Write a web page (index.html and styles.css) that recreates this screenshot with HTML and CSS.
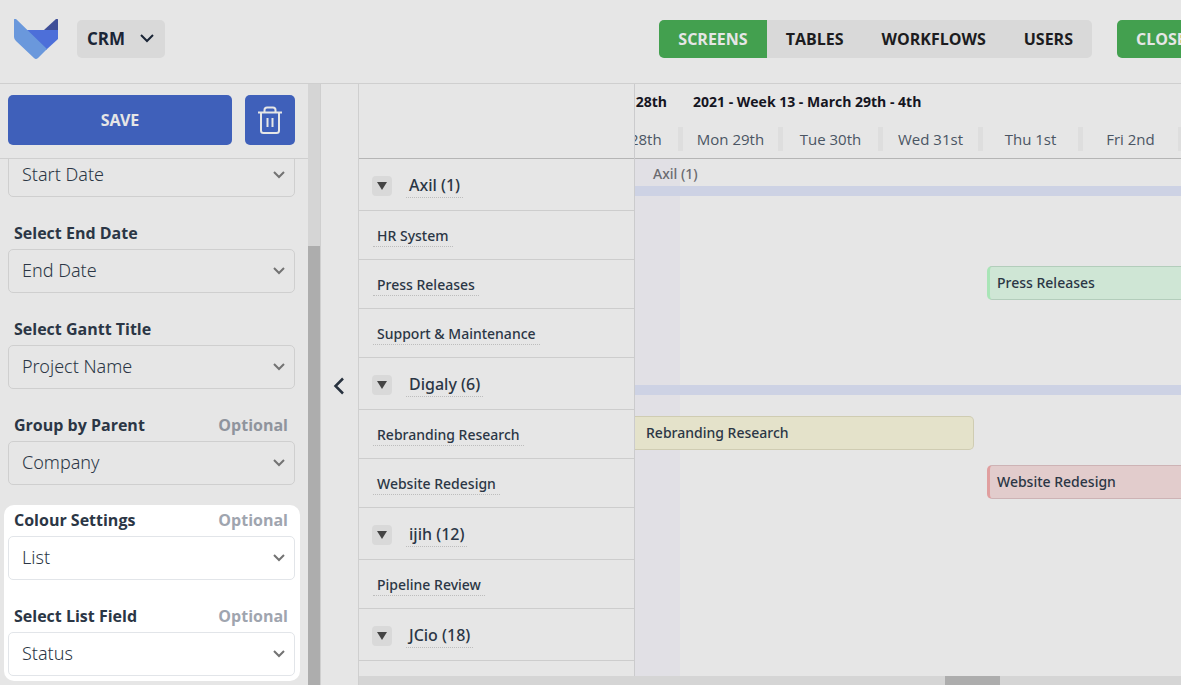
FILE: index.html
```html
<!DOCTYPE html>
<html lang="en">
<head>
<meta charset="utf-8">
<meta name="viewport" content="width=device-width, initial-scale=1">
<title>CRM - Gantt screen</title>
<link rel="stylesheet" href="styles.css">
</head>
<body>
<header class="topbar">
  <svg class="logo" viewBox="0 0 44 40" aria-hidden="true">
    <path fill="#4d6fd9" d="M13 11H44V20L32 31 13 13z"/>
    <path fill="#3f4f98" d="M30 11 42 0Q44-1 44 1V11z"/>
    <path fill="#6a98dc" d="M0 1Q0-1 2 0L33 30 24 39Q22 41 20 39L2 22Q0 20 0 18z"/>
  </svg>
  <button class="app-switch" type="button">CRM
    <svg class="app-chevron" viewBox="0 0 14 9" aria-hidden="true"><path d="M1 1l6 6 6-6"/></svg>
  </button>
  <nav class="tabs">
    <a class="tab tab-active" href="#screens">SCREENS</a>
    <a class="tab" href="#tables">TABLES</a>
    <a class="tab" href="#workflows">WORKFLOWS</a>
    <a class="tab" href="#users">USERS</a>
  </nav>
  <button class="close" type="button">CLOSE</button>
</header>

<main class="workspace">
  <aside class="sidebar">
    <div class="settings">
      <div class="actions">
        <button class="save" type="button">SAVE</button>
        <button class="delete" type="button" aria-label="Delete">
          <svg class="trash" viewBox="0 0 26 28" aria-hidden="true">
            <path d="M1 6.500H25M4 7V24.500Q4 27 6.500 27H19.500Q22 27 22 24.500V7M7.500 6V4Q7.500 1.500 10 1.500H16Q18.500 1.500 18.500 4V6M10.500 12V21M15.500 12V21"/>
          </svg>
        </button>
      </div>
      <form class="fields">
        <div class="field">
          <div class="select-box"><select id="start" aria-label="Select Start Date"><option>Start Date</option></select><svg class="select-chevron" viewBox="0 0 12 8" aria-hidden="true"><path d="M1 1l5 5 5-5"/></svg></div>
        </div>
        <div class="field">
          <div class="field-head"><label for="end">Select End Date</label></div>
          <div class="select-box"><select id="end"><option>End Date</option></select><svg class="select-chevron" viewBox="0 0 12 8" aria-hidden="true"><path d="M1 1l5 5 5-5"/></svg></div>
        </div>
        <div class="field">
          <div class="field-head"><label for="title">Select Gantt Title</label></div>
          <div class="select-box"><select id="title"><option>Project Name</option></select><svg class="select-chevron" viewBox="0 0 12 8" aria-hidden="true"><path d="M1 1l5 5 5-5"/></svg></div>
        </div>
        <div class="field">
          <div class="field-head"><label for="parent">Group by Parent</label><span class="optional">Optional</span></div>
          <div class="select-box"><select id="parent"><option>Company</option></select><svg class="select-chevron" viewBox="0 0 12 8" aria-hidden="true"><path d="M1 1l5 5 5-5"/></svg></div>
        </div>
        <div class="spotlight">
          <div class="field">
            <div class="field-head"><label for="colour">Colour Settings</label><span class="optional">Optional</span></div>
            <div class="select-box"><select id="colour"><option>List</option></select><svg class="select-chevron" viewBox="0 0 12 8" aria-hidden="true"><path d="M1 1l5 5 5-5"/></svg></div>
          </div>
          <div class="field">
            <div class="field-head"><label for="list">Select List Field</label><span class="optional">Optional</span></div>
            <div class="select-box"><select id="list"><option>Status</option></select><svg class="select-chevron" viewBox="0 0 12 8" aria-hidden="true"><path d="M1 1l5 5 5-5"/></svg></div>
          </div>
        </div>
      </form>
    </div>
    <div class="vscroll"><div class="vscroll-thumb"></div></div>
  </aside>

  <button class="collapse" type="button" aria-label="Collapse settings">
    <svg class="collapse-icon" viewBox="0 0 12 18" aria-hidden="true"><path d="M10 1.500L2.500 9l7.500 7.500"/></svg>
  </button>

  <section class="gantt">
    <div class="gantt-body">
      <div class="names">
        <div class="names-head"></div>
        <div class="row group"><button class="toggle" type="button" aria-label="Toggle Axil"><span class="arrow"></span></button><span class="group-name">Axil (1)</span></div>
        <div class="row"><span class="item-name">HR System</span></div>
        <div class="row"><span class="item-name">Press Releases</span></div>
        <div class="row"><span class="item-name">Support &amp; Maintenance</span></div>
        <div class="row group"><button class="toggle" type="button" aria-label="Toggle Digaly"><span class="arrow"></span></button><span class="group-name">Digaly (6)</span></div>
        <div class="row"><span class="item-name">Rebranding Research</span></div>
        <div class="row"><span class="item-name">Website Redesign</span></div>
        <div class="row group"><button class="toggle" type="button" aria-label="Toggle ijih"><span class="arrow"></span></button><span class="group-name">ijih (12)</span></div>
        <div class="row"><span class="item-name">Pipeline Review</span></div>
        <div class="row group"><button class="toggle" type="button" aria-label="Toggle JCio"><span class="arrow"></span></button><span class="group-name">JCio (18)</span></div>
      </div>
      <div class="chart">
        <div class="chart-head">
          <div class="weeks">
            <div class="week week-past">28th</div>
            <div class="week">2021 - Week 13 - March 29th - 4th</div>
          </div>
          <div class="days">
            <div class="day">Sun 28th</div>
            <div class="day">Mon 29th</div>
            <div class="day">Tue 30th</div>
            <div class="day">Wed 31st</div>
            <div class="day">Thu 1st</div>
            <div class="day">Fri 2nd</div>
            <div class="day"></div>
          </div>
        </div>
        <div class="lanes">
          <div class="lane lane-group"><div class="lane-label">Axil (1)</div><div class="span"></div></div>
          <div class="lane"></div>
          <div class="lane"><div class="bar bar-green" style="margin-left:352px;width:400px">Press Releases</div></div>
          <div class="lane"></div>
          <div class="lane lane-group"><div class="lane-label"></div><div class="span"></div></div>
          <div class="lane"><div class="bar bar-yellow" style="width:339px">Rebranding Research</div></div>
          <div class="lane"><div class="bar bar-red" style="margin-left:352px;width:400px">Website Redesign</div></div>
        </div>
      </div>
    </div>
    <div class="hscroll"><div class="hscroll-thumb"></div></div>
  </section>
</main>
</body>
</html>
```
FILE: styles.css
```css
* { box-sizing: border-box; }

body {
  margin: 0;
  height: 100vh;
  display: flex;
  flex-direction: column;
  overflow: hidden;
  background: #e6e6e6;
  color: #2b3645;
  font-family: "Noto Sans", "Open Sans", sans-serif;
  font-size: 14px;
}

button, select { font-family: inherit; color: inherit; margin: 0; }
button { border: 0; padding: 0; cursor: pointer; }
svg { display: block; flex: none; }

/* Top bar */
.topbar {
  flex: none;
  height: 84px;
  padding: 0 0 6px 14px;
  display: flex;
  align-items: center;
  border-bottom: 1px solid #cfcfcf;
  font-family: "Open Sans", "Noto Sans", sans-serif;
}
.logo { width: 44px; height: 40px; }
.app-switch {
  margin-left: 19px;
  height: 38px;
  padding: 0 11px 0 10px;
  display: flex;
  align-items: center;
  gap: 15px;
  border-radius: 5px;
  background: #d9d9d9;
  color: #1a2536;
  font-size: 17px;
  font-weight: 700;
}
.app-chevron { width: 14px; height: 9px; fill: none; stroke: #1a2536; stroke-width: 2; }
.tabs {
  margin-left: auto;
  height: 38px;
  display: flex;
  border-radius: 5px;
  overflow: hidden;
  background: #d9d9d9;
}
.tab {
  padding: 0 19px;
  line-height: 38px;
  color: #1c1c20;
  font-size: 16px;
  font-weight: 700;
  text-decoration: none;
}
.tab-active { background: #43a04f; color: #e6e6e6; }
.close {
  flex: none;
  width: 64px;
  height: 38px;
  margin-left: 25px;
  padding-left: 19px;
  border-radius: 5px 0 0 5px;
  overflow: hidden;
  background: #43a04f;
  color: #e6e6e6;
  font-size: 16px;
  font-weight: 700;
  text-align: left;
  white-space: nowrap;
}

.workspace { flex: 1; min-height: 0; display: flex; }

/* Settings panel */
.sidebar { flex: none; width: 321px; display: flex; border-right: 1px solid #cfcfcf; }
.settings { flex: 1; min-width: 0; display: flex; flex-direction: column; }
.actions {
  flex: none;
  display: flex;
  gap: 13px;
  padding: 11px 13px 13px 8px;
  border-bottom: 1px solid #cfcfcf;
}
.save, .delete { height: 50px; border-radius: 5px; background: #3f60ba; color: #e6e6e6; }
.save { flex: 1; font-size: 16px; font-weight: 700; }
.delete { width: 50px; display: flex; align-items: center; justify-content: center; }
.trash { width: 26px; height: 28px; fill: none; stroke: #e6e6e6; stroke-width: 2; }

.fields {
  flex: 1;
  min-height: 0;
  display: flex;
  flex-direction: column;
  justify-content: flex-end;
  gap: 24px;
  padding: 0 8px 4px 4px;
  overflow: hidden;
}
.field { flex: none; padding: 0 5px 0 4px; }
.field-head {
  display: flex;
  justify-content: space-between;
  margin-bottom: 4px;
  padding: 0 7px 0 6px;
  font-family: "Open Sans", "Noto Sans", sans-serif;
  font-size: 16px;
  font-weight: 700;
  line-height: 24px;
}
.optional { color: #8f949d; }
.select-box { display: grid; align-items: center; }
.select-box > * { grid-area: 1 / 1; }
.select-box select {
  width: 100%;
  height: 44px;
  padding: 0 32px 2px 13px;
  appearance: none;
  border: 1px solid #cfcfcf;
  border-radius: 5px;
  background: transparent;
  font-size: 18px;
  font-weight: 300;
}
.select-chevron {
  justify-self: end;
  width: 12px;
  height: 8px;
  margin-right: 10px;
  fill: none;
  stroke: #737373;
  stroke-width: 2;
  pointer-events: none;
}
.spotlight {
  flex: none;
  display: flex;
  flex-direction: column;
  gap: 24px;
  margin-top: -4px;
  padding: 3px 0 5px;
  border-radius: 10px;
  background: #fff;
}
.spotlight select { border-color: #e2e5e9; }
.spotlight .optional { color: #9fa5af; }

.vscroll { width: 12px; padding-top: 162px; background: #d5d5d5; }
.vscroll-thumb { height: 100%; background: #adadad; }

.collapse {
  flex: none;
  width: 37px;
  padding: 2px 2px 0 0;
  display: flex;
  align-items: center;
  justify-content: center;
  background: transparent;
}
.collapse-icon { width: 12px; height: 18px; fill: none; stroke: #28323f; stroke-width: 2.500; }

/* Gantt */
.gantt {
  flex: 1;
  min-width: 0;
  display: flex;
  flex-direction: column;
  border-left: 1px solid #cfcfcf;
}
.gantt-body { flex: 1; min-height: 0; display: flex; overflow: hidden; }
.names { flex: none; width: 276px; border-right: 1px solid #cbcbcd; }
.names-head, .chart-head { height: 75px; border-bottom: 1px solid #b5b5b5; }
.row {
  height: 49px;
  padding: 2px 0 0 14px;
  display: flex;
  align-items: center;
  border-bottom: 1px solid #cdcdcd;
}
.group { height: 52px; padding-left: 13px; gap: 14px; }
.toggle {
  width: 20px;
  height: 20px;
  display: flex;
  align-items: center;
  justify-content: center;
  border-radius: 4px;
  background: #d9d9d9;
}
.arrow {
  border: 5px solid transparent;
  border-top: 8px solid #444;
  border-bottom: 0;
}
.group-name, .item-name {
  padding: 0 3px;
  border-bottom: 1px dotted #bdbdbd;
  font-weight: 500;
}
.group-name { font-size: 16px; line-height: 24px; }
.item-name { padding: 0 4px; line-height: 20px; }

.chart { flex: 1; min-width: 0; display: flex; flex-direction: column; overflow: hidden; }
.chart-head {
  flex: none;
  padding-top: 8px;
  font-family: "Open Sans", "Noto Sans", sans-serif;
}
.weeks { display: flex; line-height: 20px; font-weight: 700; color: #15151f; white-space: nowrap; }
.week { padding-left: 13px; }
.week-past {
  flex: none;
  width: 45px;
  padding: 0 13px 0 0;
  display: flex;
  justify-content: flex-end;
}
.days { display: flex; margin: 15px 0 0 -52px; }
.day {
  flex: none;
  width: 100px;
  border-right: 5px solid #dedede;
  color: #4a5563;
  font-size: 15px;
  line-height: 24px;
  text-align: center;
}
.lanes {
  flex: 1;
  background: linear-gradient(#e1e0e5, #e1e0e5) 0 0 / 45px 100% no-repeat;
}
.lane { height: 49px; display: flow-root; }
.lane-group { height: 52px; }
.lane-label {
  height: 27px;
  padding: 5px 0 0 18px;
  line-height: 20px;
  font-weight: 500;
  color: #6b6b70;
}
.span { height: 10px; background: #cdd2e4; }
.bar {
  height: 34px;
  margin-top: 6px;
  padding-left: 7px;
  border: 1px solid;
  border-radius: 5px;
  line-height: 32px;
  font-weight: 500;
}
.bar-green { background: #cfe6d5; border-color: #b3cdbb; border-left: 3px solid #a9e5b7; }
.bar-yellow {
  padding-left: 11px;
  background: #e4e2ca;
  border-color: #cfccb2;
  border-left: 0;
  border-radius: 0 5px 5px 0;
}
.bar-red { background: #e2cccc; border-color: #cdb3b5; border-left: 3px solid #e09f9f; }

.hscroll { flex: none; height: 9px; background: #d5d5d5; }
.hscroll-thumb { width: 55px; height: 9px; margin-left: 586px; background: #adadad; }
```
